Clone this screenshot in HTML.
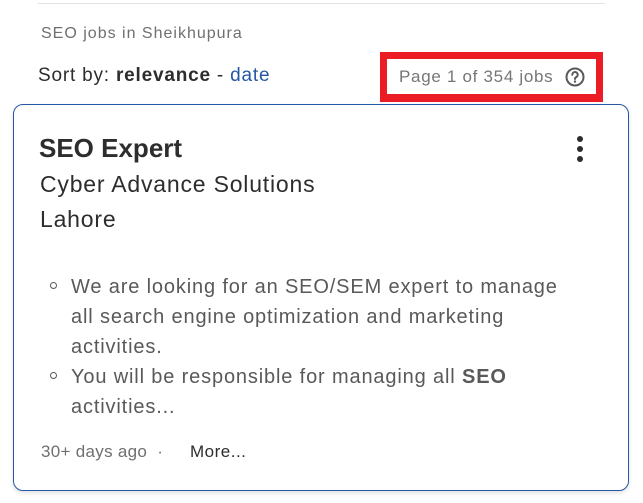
<!DOCTYPE html>
<html><head><meta charset="utf-8"><style>
*{margin:0;padding:0;box-sizing:border-box}
body{width:643px;height:503px;background:#fff;font-family:"Liberation Sans",sans-serif;position:relative;overflow:hidden;color:#2d2d2d}
.a{position:absolute;white-space:nowrap}
</style></head><body>
<div class="a" style="left:38px;top:3px;width:567px;height:1px;background:#e4e2e0"></div>
<div class="a" style="left:41px;top:25px;font-size:16px;color:#6f6f6f;letter-spacing:1px">SEO jobs in Sheikhupura</div>
<div class="a" style="left:38px;top:65px;font-size:19px;color:#2d2d2d;letter-spacing:0.8px">Sort by: <b>relevance</b> - <span style="color:#2557a7">date</span></div>
<div class="a" style="left:380px;top:52px;width:223px;height:50px;border:7px solid #ec1c24;border-bottom-width:8px"></div>
<div class="a" style="left:399px;top:67px;font-size:17px;color:#767676;letter-spacing:0.7px">Page 1 of 354 jobs</div>
<svg class="a" style="left:564px;top:66px" width="22" height="22" viewBox="0 0 22 22"><circle cx="11" cy="11" r="8.5" fill="none" stroke="#595959" stroke-width="2"/><path d="M8.3 8.8a2.7 2.7 0 1 1 3.8 2.4c-.8.4-1.1.9-1.1 1.8" fill="none" stroke="#595959" stroke-width="2" stroke-linecap="round"/><circle cx="11" cy="15.6" r="1.2" fill="#595959"/></svg>
<div class="a" style="left:13px;top:104px;width:616px;height:387px;border:1px solid #2557a7;border-radius:10px;box-shadow:0 2px 4px rgba(0,0,0,0.12)"></div>
<div class="a" style="left:39px;top:133px;font-size:26px;font-weight:bold;color:#2d2d2d">SEO Expert</div>
<div class="a" style="left:40px;top:171px;font-size:23px;color:#2d2d2d;letter-spacing:0.8px">Cyber Advance Solutions</div>
<div class="a" style="left:40px;top:206px;font-size:23px;color:#2d2d2d;letter-spacing:0.8px">Lahore</div>
<div class="a" style="left:577px;top:136px;width:6px;height:6px;border-radius:50%;background:#2d2d2d"></div>
<div class="a" style="left:577px;top:146px;width:6px;height:6px;border-radius:50%;background:#2d2d2d"></div>
<div class="a" style="left:577px;top:156px;width:6px;height:6px;border-radius:50%;background:#2d2d2d"></div>
<div class="a" style="left:50px;top:282px;width:7px;height:7px;border:1px solid #595959;border-radius:50%"></div>
<div class="a" style="left:50px;top:372px;width:7px;height:7px;border:1px solid #595959;border-radius:50%"></div>
<div class="a" style="left:71px;top:272px;font-size:20px;line-height:30px;color:#595959;letter-spacing:0.85px">We are looking for an SEO/SEM expert to manage<br>all search engine optimization and marketing<br>activities.<br>You will be responsible for managing all <b>SEO</b><br>activities...</div>
<div class="a" style="left:41px;top:442px;font-size:17px;color:#6f6f6f;letter-spacing:0.3px">30+ days ago &nbsp;·</div>
<div class="a" style="left:190px;top:442px;font-size:17px;color:#2d2d2d;letter-spacing:0.5px">More...</div>
</body></html>
